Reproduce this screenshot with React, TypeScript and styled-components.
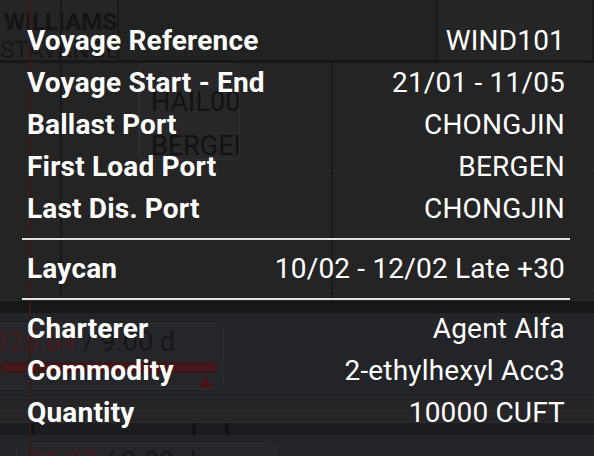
import React from 'react';
import styled, { createGlobalStyle } from 'styled-components';

const GlobalStyle = createGlobalStyle`
  html, body {
    margin: 0;
    padding: 0;
    background: #252525;
    font-family: Roboto, 'Liberation Sans', sans-serif;
  }
`;

const Screen = styled.div`
  position: relative;
  width: 594px;
  height: 456px;
  overflow: hidden;
  background: #252525;
`;

/* ---------- the gantt board underneath ---------- */

const Board = styled.div`
  display: flex;
  flex-direction: column;
  height: 100%;
`;

const HeaderBand = styled.div`
  display: grid;
  grid-template-columns: 119px 319px 1fr;
  height: 60px;
  flex-shrink: 0;
`;

const VesselCell = styled.div`
  display: flex;
  flex-direction: column;
  padding: 8px 0 0 4px;
  background: #272727;
  border-right: 2px solid #1b1b1b;
  overflow: hidden;
  white-space: nowrap;
`;

const VesselName = styled.span`
  font-size: 24px;
  font-weight: 700;
  line-height: 28px;
  color: #141414;
`;

const VesselPort = styled.span`
  font-size: 24px;
  line-height: 28px;
  color: #161616;
  margin-left: -4px;
`;

const HeaderCell = styled.div<{ $tone: string }>`
  background: ${({ $tone }) => $tone};
  border-right: 2px solid #1b1b1b;
`;

const Splitter = styled.div<{ $h: number }>`
  height: ${({ $h }) => $h}px;
  flex-shrink: 0;
  background: #171717;
`;

const Lane = styled.div<{ $h: number; $tone?: string }>`
  position: relative;
  height: ${({ $h }) => $h}px;
  flex-shrink: 0;
  background: ${({ $tone }) => $tone || '#252525'};
  border-bottom: 1px solid #2d2d2d;
  display: flex;
  align-items: flex-start;
`;

const VoyageCard = styled.div`
  margin: 0 0 0 138px;
  width: 100px;
  height: 95px;
  border: 1px solid #303030;
  border-radius: 6px;
  background: #29292b;
  display: flex;
  overflow: hidden;
`;

const CardEdge = styled.div`
  width: 10px;
  border-right: 1px solid #333;
  background: #262628;
`;

const CardBody = styled.div`
  display: flex;
  flex-direction: column;
  padding: 16px 0 0 11px;
  font-size: 27px;
  line-height: 44px;
  color: #121214;
  white-space: nowrap;
`;

const ProgressCard = styled.div<{ $top: number; $left: number; $w: number }>`
  margin: ${({ $top }) => $top}px 0 0 ${({ $left }) => $left}px;
  width: ${({ $w }) => $w}px;
  height: 66px;
  border: 1px solid #2e2f33;
  border-radius: 8px;
  background: #27282c;
  display: flex;
  flex-direction: column;
  padding-left: 12px;
  box-sizing: border-box;
  flex-shrink: 0;
`;

const ProgressText = styled.div`
  font-size: 27px;
  line-height: 32px;
  color: #17171a;
  white-space: nowrap;
  margin-top: 2px;
`;

const Late = styled.span`
  color: #4a1c1e;
`;

const ProgressBar = styled.div`
  margin: 4px 0 0 8px;
  width: 212px;
  height: 8px;
  border: 2px solid #3d1618;
  border-radius: 3px;
  background: #4a1719;
`;

const Marker = styled.div`
  margin: 3px 0 0 206px;
  width: 0;
  height: 0;
  border-left: 7px solid transparent;
  border-right: 7px solid transparent;
  border-bottom: 12px solid #4a1214;
`;

const TickBand = styled.div`
  height: 12px;
  flex-shrink: 0;
  background: #1c1d20;
  display: flex;
`;

const Tick = styled.div<{ $at: number }>`
  width: 4px;
  height: 12px;
  margin-left: ${({ $at }) => $at}px;
  background: #111214;
`;

const TimeLine = styled.div<{ $x: number; $color: string; $top?: number; $bottom?: number }>`
  position: absolute;
  left: ${({ $x }) => $x}px;
  top: ${({ $top }) => $top ?? 0}px;
  bottom: ${({ $bottom }) => $bottom ?? 0}px;
  width: 2px;
  background: ${({ $color }) => $color};
`;

/* ---------- tooltip ---------- */

const Tooltip = styled.div`
  position: absolute;
  left: 0;
  top: 0;
  width: 591px;
  height: 456px;
  box-sizing: border-box;
  padding: 20px 21px 0 22px;
  background: rgba(30, 30, 30, 0.08);
  border-radius: 0 0 6px 0;
  color: #ffffff;
`;

const Row = styled.div`
  display: flex;
  justify-content: space-between;
  align-items: center;
  height: 42px;
  padding: 0 5px;
  font-size: 28px;
  line-height: 42px;
  letter-spacing: 0.18px;
  white-space: nowrap;
`;

const Label = styled.span`
  font-weight: 700;
`;

const Value = styled.span`
  font-weight: 400;
`;

const Divider = styled.div`
  height: 2px;
  margin: 8px 0;
  background: #e2e2e2;
`;

type Entry = { label: string; value: string };

const voyage: Entry[] = [
  { label: 'Voyage Reference', value: 'WIND101' },
  { label: 'Voyage Start - End', value: '21/01 - 11/05' },
  { label: 'Ballast Port', value: 'CHONGJIN' },
  { label: 'First Load Port', value: 'BERGEN' },
  { label: 'Last Dis. Port', value: 'CHONGJIN' },
];

const laycan: Entry[] = [{ label: 'Laycan', value: '10/02 - 12/02 Late +30' }];

const cargo: Entry[] = [
  { label: 'Charterer', value: 'Agent Alfa' },
  { label: 'Commodity', value: '2-ethylhexyl Acc3' },
  { label: 'Quantity', value: '10000 CUFT' },
];

const Rows: React.FC<{ items: Entry[] }> = ({ items }) => (
  <>
    {items.map((item) => (
      <Row key={item.label}>
        <Label>{item.label}</Label>
        <Value>{item.value}</Value>
      </Row>
    ))}
  </>
);

const App: React.FC = () => {
  return (
    <>
      <GlobalStyle />
      <Screen>
        <Board>
          <HeaderBand>
            <VesselCell>
              <VesselName>WILLIAMS</VesselName>
              <VesselPort>STAVANGER</VesselPort>
            </VesselCell>
            <HeaderCell $tone="#222424" />
            <HeaderCell $tone="#262626" />
          </HeaderBand>
          <Splitter $h={3} />
          <Lane $h={107}>
            <VoyageCard>
              <CardEdge />
              <CardBody>
                <span>HAIL00</span>
                <span>BERGEN</span>
              </CardBody>
            </VoyageCard>
          </Lane>
          <Lane $h={119} />
          <Lane $h={9} />
          <Splitter $h={12} />
          <Lane $h={84} $tone="#24252a">
            <ProgressCard $top={10} $left={-20} $w={244}>
              <ProgressText>
                <Late>325.84</Late> / 9.00 d
              </ProgressText>
              <ProgressBar />
              <Marker />
            </ProgressCard>
          </Lane>
          <Lane $h={12} $tone="#262629" />
          <Lane $h={11} $tone="#262629" />
          <TickBand>
            <Tick $at={30} />
            <Tick $at={158} />
            <Tick $at={29} />
          </TickBand>
          <Lane $h={40} $tone="#24252a">
            <ProgressCard $top={8} $left={16} $w={260}>
              <ProgressText>
                <Late>20.07</Late> / 2.00 d
              </ProgressText>
            </ProgressCard>
          </Lane>
        </Board>
        <TimeLine $x={29} $color="#3a1a1a" />
        <TimeLine $x={60} $color="#181818" $bottom={160} />
        <TimeLine $x={331} $color="#1b1b1b" $top={63} $bottom={155} />

        <Tooltip>
          <Rows items={voyage} />
          <Divider />
          <Rows items={laycan} />
          <Divider />
          <Rows items={cargo} />
        </Tooltip>
      </Screen>
    </>
  );
};

export default App;
